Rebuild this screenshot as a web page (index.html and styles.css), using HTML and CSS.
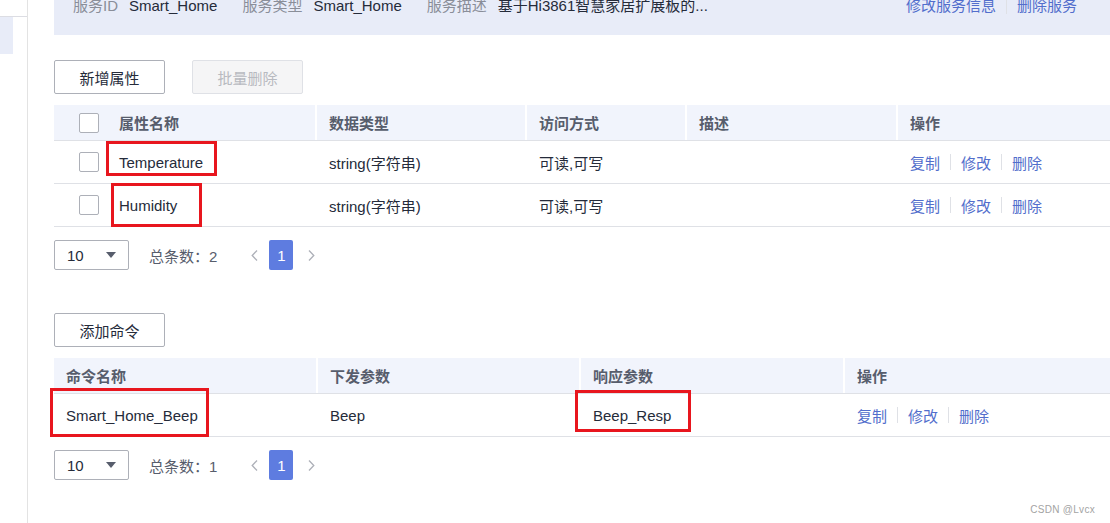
FILE: index.html
```html
<!DOCTYPE html>
<html lang="zh-CN">
<head>
    <meta charset="UTF-8">
    <meta name="viewport" content="width=device-width, initial-scale=1.0">
    <title>服务详情</title>
    <link rel="stylesheet" href="styles.css">
</head>
<body>
    <div class="layout">
        <aside class="sidebar">
            <div class="side-top"></div>
            <div class="side-active"></div>
        </aside>

        <main class="content">
            <div class="service-info">
                <div class="info-row">
                    <span class="info-item"><span class="info-label">服务ID</span><span class="info-value">Smart_Home</span></span>
                    <span class="info-item"><span class="info-label">服务类型</span><span class="info-value">Smart_Home</span></span>
                    <span class="info-item"><span class="info-label">服务描述</span><span class="info-value">基于Hi3861智慧家居扩展板的...</span></span>
                    <span class="info-actions">
                        <a class="link">修改服务信息</a>
                        <span class="sep"></span>
                        <a class="link">删除服务</a>
                    </span>
                </div>
            </div>

            <!-- 属性 -->
            <div class="toolbar">
                <button class="btn">新增属性</button>
                <button class="btn btn-disabled">批量删除</button>
            </div>

            <div class="data-table props-table">
                <div class="table-row table-head">
                    <div class="cell cell-name"><span class="checkbox"></span>属性名称</div>
                    <div class="cell">数据类型</div>
                    <div class="cell">访问方式</div>
                    <div class="cell">描述</div>
                    <div class="cell">操作</div>
                </div>
                <div class="table-row">
                    <div class="cell cell-name"><span class="checkbox"></span>Temperature<span class="mark mark-temp"></span></div>
                    <div class="cell">string(字符串)</div>
                    <div class="cell">可读,可写</div>
                    <div class="cell"></div>
                    <div class="cell actions">
                        <a class="link">复制</a><span class="sep"></span><a class="link">修改</a><span class="sep"></span><a class="link">删除</a>
                    </div>
                </div>
                <div class="table-row">
                    <div class="cell cell-name"><span class="checkbox"></span>Humidity<span class="mark mark-hum"></span></div>
                    <div class="cell">string(字符串)</div>
                    <div class="cell">可读,可写</div>
                    <div class="cell"></div>
                    <div class="cell actions">
                        <a class="link">复制</a><span class="sep"></span><a class="link">修改</a><span class="sep"></span><a class="link">删除</a>
                    </div>
                </div>
            </div>

            <div class="pager">
                <div class="page-size">
                    <span>10</span>
                    <svg width="10" height="6" viewBox="0 0 10 6"><path d="M0 0h10L5 6z" fill="#575d6c"/></svg>
                </div>
                <span class="total">总条数：2</span>
                <span class="page-arrow prev"><svg width="7" height="11" viewBox="0 0 7 11"><path d="M6 0.5L1.2 5.5L6 10.5" fill="none" stroke="#adb0b8" stroke-width="1.3"/></svg></span>
                <span class="page-num">1</span>
                <span class="page-arrow next"><svg width="7" height="11" viewBox="0 0 7 11"><path d="M1 0.5L5.8 5.5L1 10.5" fill="none" stroke="#adb0b8" stroke-width="1.3"/></svg></span>
            </div>

            <!-- 命令 -->
            <div class="toolbar cmd-toolbar">
                <button class="btn">添加命令</button>
            </div>

            <div class="data-table cmds-table">
                <div class="table-row table-head">
                    <div class="cell">命令名称</div>
                    <div class="cell">下发参数</div>
                    <div class="cell">响应参数</div>
                    <div class="cell">操作</div>
                </div>
                <div class="table-row">
                    <div class="cell">Smart_Home_Beep<span class="mark mark-cmd"></span></div>
                    <div class="cell">Beep</div>
                    <div class="cell">Beep_Resp<span class="mark mark-resp"></span></div>
                    <div class="cell actions">
                        <a class="link">复制</a><span class="sep"></span><a class="link">修改</a><span class="sep"></span><a class="link">删除</a>
                    </div>
                </div>
            </div>

            <div class="pager">
                <div class="page-size">
                    <span>10</span>
                    <svg width="10" height="6" viewBox="0 0 10 6"><path d="M0 0h10L5 6z" fill="#575d6c"/></svg>
                </div>
                <span class="total">总条数：1</span>
                <span class="page-arrow prev"><svg width="7" height="11" viewBox="0 0 7 11"><path d="M6 0.5L1.2 5.5L6 10.5" fill="none" stroke="#adb0b8" stroke-width="1.3"/></svg></span>
                <span class="page-num">1</span>
                <span class="page-arrow next"><svg width="7" height="11" viewBox="0 0 7 11"><path d="M1 0.5L5.8 5.5L1 10.5" fill="none" stroke="#adb0b8" stroke-width="1.3"/></svg></span>
            </div>
        </main>

        <div class="watermark">CSDN @Lvcx</div>
    </div>
</body>
</html>
```

FILE: styles.css
```css
body {
    margin: 0;
    font-family: "Liberation Sans", "Noto Sans CJK SC", sans-serif;
    font-size: 15px;
    color: #252b3a;
    background: #fff;
}

.layout {
    display: flex;
    height: 523px;
    overflow: hidden;
    position: relative;
}

.sidebar {
    width: 27px;
    flex-shrink: 0;
    border-right: 1px solid #e3e3e3;
}

.side-top {
    height: 16px;
    border-bottom: 1px solid #dcdde3;
}

.side-active {
    width: 13px;
    height: 37px;
    background: #e8ecf8;
}

.content {
    flex: 1;
    margin-left: 26px;
    min-width: 0;
}

/* 服务信息 */
.service-info {
    height: 35px;
    background: #e8ecf8;
    padding: 0 33px 0 19px;
    overflow: hidden;
}

.info-row {
    display: flex;
    align-items: center;
    line-height: 20px;
    margin-top: -4px;
}

.info-item {
    margin-right: 25px;
    white-space: nowrap;
}

.info-label {
    color: #8a8e99;
    margin-right: 11px;
}

.info-actions {
    margin-left: auto;
    display: flex;
    align-items: center;
}

.info-actions .sep {
    margin: 0 10px;
}

.link {
    color: #526ecc;
    cursor: pointer;
}

.sep {
    display: inline-block;
    width: 1px;
    height: 16px;
    background: #dfe1e6;
}

/* 按钮 */
.toolbar {
    display: flex;
    gap: 27px;
    margin-top: 25px;
}

.cmd-toolbar {
    margin-top: 43px;
}

.btn {
    width: 111px;
    height: 34px;
    border: 1px solid #adb0b8;
    border-radius: 2px;
    background: #fff;
    color: #252b3a;
    font-family: inherit;
    font-size: 15px;
    padding: 0;
    cursor: pointer;
}

.btn-disabled {
    background: #f5f5f6;
    border-color: #dfe1e6;
    color: #b8bac0;
    cursor: not-allowed;
}

/* 表格 */
.data-table {
    margin-top: 11px;
    width: 1056px;
}

.table-row {
    display: grid;
    height: 42px;
    border-bottom: 1px solid #dfe1e6;
}

.props-table .table-row {
    grid-template-columns: 261px 210px 160px 211px 1fr;
}

.cmds-table .table-row {
    grid-template-columns: 262px 263px 264px 1fr;
}

.table-head {
    height: 35px;
    background: #f1f4fc;
}

.cell {
    display: flex;
    align-items: center;
    padding: 0 13px 0 14px;
    position: relative;
    white-space: nowrap;
}

.table-head .cell {
    font-weight: bold;
    color: #575d6c;
    padding-left: 12px;
    border-left: 2px solid #fff;
}

.table-head .cell:first-child {
    border-left: none;
}

.cmds-table .cell:first-child {
    padding-left: 12px;
}

.props-table .cell-name {
    padding-left: 25px;
}

.checkbox {
    width: 18px;
    height: 18px;
    border: 1px solid #adb0b8;
    border-radius: 2px;
    background: #fff;
    margin-right: 20px;
}

.actions .link {
    padding: 0;
}

.actions .sep {
    margin: 0 10px 0 10px;
}

/* 红框标注 */
.mark {
    position: absolute;
    border: 3px solid #e8161e;
    box-sizing: border-box;
}

.mark-temp {
    left: 52px;
    top: 0;
    width: 111px;
    height: 35px;
}

.mark-hum {
    left: 57px;
    top: -1px;
    width: 91px;
    height: 44px;
}

.mark-cmd {
    left: -4px;
    top: -6px;
    width: 159px;
    height: 49px;
}

.mark-resp {
    left: -4px;
    top: -4px;
    width: 116px;
    height: 42px;
}

/* 分页 */
.pager {
    display: flex;
    align-items: center;
    height: 30px;
    margin-top: 13px;
}

.page-size {
    width: 75px;
    height: 30px;
    box-sizing: border-box;
    border: 1px solid #adb0b8;
    border-radius: 2px;
    display: flex;
    align-items: center;
    justify-content: space-between;
    padding: 0 12px 0 12px;
}

.total {
    color: #575d6c;
    margin-left: 20px;
}

.page-arrow {
    width: 24px;
    height: 30px;
    display: flex;
    align-items: center;
    justify-content: center;
}

.prev {
    margin-left: 25px;
    margin-right: 3px;
}

.next {
    margin-left: 6px;
}

.page-num {
    width: 24px;
    height: 30px;
    background: #5e7ce0;
    color: #fff;
    border-radius: 2px;
    display: flex;
    align-items: center;
    justify-content: center;
}

.watermark {
    position: absolute;
    right: 15px;
    bottom: 8px;
    font-size: 10px;
    color: #a3a3a3;
    letter-spacing: 0.3px;
}
```
